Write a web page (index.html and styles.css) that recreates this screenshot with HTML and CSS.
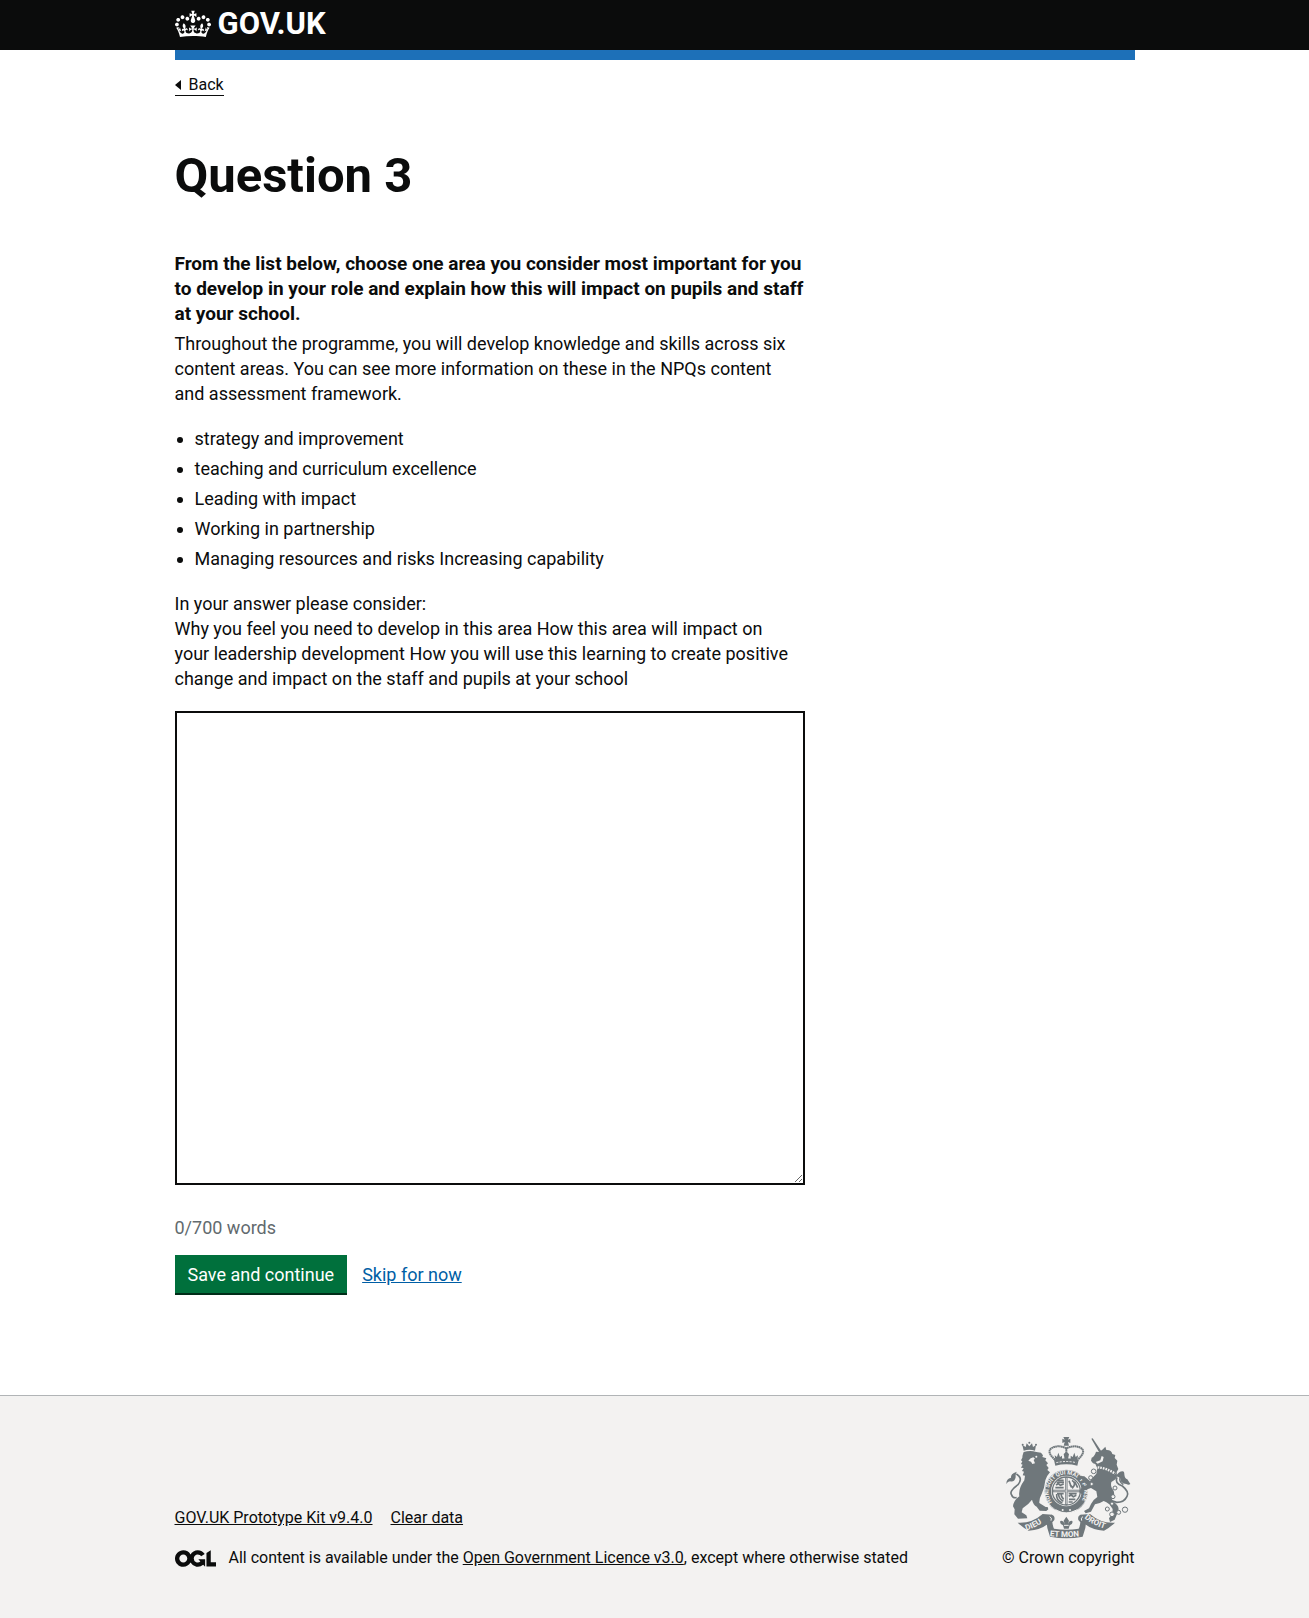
FILE: index.html
```html
<!DOCTYPE html>
<html lang="en">
<head>
  <meta charset="utf-8">
  <meta name="viewport" content="width=device-width, initial-scale=1">
  <title>Question 3 - GOV.UK</title>
  <link rel="stylesheet" href="styles.css">
</head>
<body>
  <header class="header">
    <div class="container header-inner">
      <a class="logo" href="#">
        <svg class="logo-crown" aria-hidden="true" viewBox="0 0 132 97" width="36" height="30"><path fill="currentColor" fill-rule="evenodd" d="M25 30.2c3.5 1.5 7.7-.2 9.1-3.7 1.5-3.6-.2-7.8-3.9-9.2-3.6-1.4-7.6.3-9.1 3.9-1.4 3.5.3 7.5 3.9 9zM9 39.5c3.6 1.5 7.8-.2 9.2-3.7 1.5-3.6-.2-7.8-3.9-9.1-3.6-1.5-7.6.2-9.1 3.8-1.4 3.5.3 7.5 3.8 9zM4.4 57.2c3.5 1.5 7.7-.2 9.1-3.8 1.5-3.6-.2-7.7-3.9-9.1-3.5-1.5-7.6.3-9.1 3.8-1.4 3.5.3 7.6 3.9 9.1zm38.3-21.4c3.5 1.5 7.7-.2 9.1-3.8 1.5-3.6-.2-7.7-3.9-9.1-3.6-1.5-7.6.3-9.1 3.8-1.3 3.6.4 7.7 3.9 9.1zm64.4-5.6c-3.6 1.5-7.8-.2-9.1-3.7-1.5-3.6.2-7.8 3.8-9.2 3.6-1.4 7.7.3 9.2 3.9 1.3 3.5-.4 7.5-3.9 9zm15.9 9.3c-3.6 1.5-7.7-.2-9.1-3.7-1.5-3.6.2-7.8 3.7-9.1 3.6-1.5 7.7.2 9.2 3.8 1.5 3.5-.3 7.5-3.8 9zm4.7 17.7c-3.6 1.5-7.8-.2-9.2-3.8-1.5-3.6.2-7.7 3.9-9.1 3.6-1.5 7.7.3 9.2 3.8 1.3 3.5-.4 7.6-3.9 9.1zM89.3 35.8c-3.6 1.5-7.8-.2-9.2-3.8-1.4-3.6.2-7.7 3.9-9.1 3.6-1.5 7.7.3 9.2 3.8 1.4 3.6-.3 7.7-3.9 9.1zM69.7 17.7l8.9 4.7V9.3l-8.9 2.8c-.2-.3-.5-.6-.9-.9L72.4 0H59.6l3.5 11.2c-.3.3-.6.5-.9.9l-8.8-2.8v13.1l8.8-4.7c.3.3.6.7.9.9l-5 15.4v.1c-.2.8-.4 1.6-.4 2.4 0 4.1 3.1 7.5 7 8.1h.2c.3 0 .7.1 1 .1.4 0 .7 0 1-.1h.2c4-.6 7.1-4.1 7.1-8.1 0-.8-.1-1.7-.4-2.4V34l-5.1-15.4c.4-.2.7-.6 1-.9zM66 92.8c16.9 0 32.8 1.1 47.1 3.2 4-16.9 8.9-26.7 14-33.5l-9.6-3.4c1 4.9 1.1 7.2 0 10.2-1.5-1.4-3-4.3-4.2-8.7L108.6 76c2.8-2 5-3.2 7.5-3.3-4.4 9.4-10 11.9-13.6 11.2-4.3-.8-6.3-4.6-5.6-7.9 1-4.7 5.7-5.9 8-.5 4.3-8.7-3-11.4-7.6-8.8 7.1-7.2 7.9-13.5 2.1-21.1-8 6.1-8.1 12.3-4.5 20.8-4.7-5.4-12.1-2.5-9.5 6.2 3.4-5.2 7.9-2 7.2 3.1-.6 4.3-6.4 7.8-13.5 7.2-10.3-.9-10.9-8-11.2-13.8 2.5-.5 7.1 1.8 11 7.3L80.2 60c-4.1 4.4-8 5.3-12.3 5.4 1.4-4.4 8-11.6 8-11.6H55.5s6.4 7.2 7.9 11.6c-4.2-.1-8-1-12.3-5.4l1.4 16.4c3.9-5.5 8.5-7.7 10.9-7.3-.3 5.8-.9 12.8-11.1 13.8-7.2.6-12.9-2.9-13.5-7.2-.7-5 3.8-8.3 7.1-3.1 2.7-8.7-4.6-11.6-9.4-6.2 3.7-8.5 3.6-14.7-4.6-20.8-5.8 7.6-5 13.9 2.2 21.1-4.7-2.6-11.9.1-7.7 8.8 2.3-5.5 7.1-4.2 8.1.5.7 3.3-1.3 7.1-5.7 7.9-3.5.7-9-1.8-13.5-11.2 2.5.1 4.7 1.3 7.5 3.3l-4.7-15.4c-1.2 4.4-2.7 7.2-4.3 8.7-1.1-3-.9-5.3 0-10.2l-9.5 3.4c5 6.9 9.9 16.7 14 33.5 14.8-2.1 30.8-3.2 47.7-3.2z"/></svg>
        <span class="logo-text">GOV.UK</span>
      </a>
    </div>
  </header>

  <div class="container page">
    <div class="phase-bar"></div>
    <a class="back-link" href="#">Back</a>
    <main class="main">
      <h1 class="title">Question 3</h1>
      <form class="form">
        <label class="label" for="answer">From the list below, choose one area you consider most important for you to develop in your role and explain how this will impact on pupils and staff at your school.</label>
        <div class="hint" id="answer-hint">
          <p class="text">Throughout the programme, you will develop knowledge and skills across six content areas. You can see more information on these in the NPQs content and assessment framework.</p>
          <ul class="list">
            <li>strategy and improvement</li>
            <li>teaching and curriculum excellence</li>
            <li>Leading with impact</li>
            <li>Working in partnership</li>
            <li>Managing resources and risks Increasing capability</li>
          </ul>
          <p class="text">In your answer please consider:<br>Why you feel you need to develop in this area How this area will impact on<br>your leadership development How you will use this learning to create positive change and impact on the staff and pupils at your school</p>
        </div>
        <textarea class="textarea" id="answer" name="answer" aria-describedby="answer-hint word-count"></textarea>
        <p class="word-count" id="word-count">0/700 words</p>
        <div class="actions">
          <button class="button" type="submit">Save and continue</button>
          <a class="link" href="#">Skip for now</a>
        </div>
      </form>
    </main>
  </div>

  <footer class="footer">
    <div class="container footer-inner">
      <div class="footer-meta">
        <ul class="footer-links">
          <li><a href="#">GOV.UK Prototype Kit v9.4.0</a></li>
          <li><a href="#">Clear data</a></li>
        </ul>
        <div class="licence">
          <svg class="licence-logo" aria-hidden="true" viewBox="0 0 483.2 195.7" width="41" height="17"><path fill="currentColor" d="M421.5 142.8V.1l-50.7 32.3v161.1h112.4v-50.7zm-122.3-9.6A47.12 47.12 0 0 1 221 97.8c0-26 21.1-47.1 47.1-47.1 16.7 0 31.4 8.7 39.7 21.8l42.7-27.2A97.63 97.63 0 0 0 268.1 0c-36.5 0-68.3 20.1-85.1 49.7A98 98 0 0 0 97.8 0C43.9 0 0 43.9 0 97.8s43.9 97.8 97.8 97.8c36.5 0 68.3-20.1 85.1-49.7a97.76 97.76 0 0 0 149.6 25.4l19.4 22.2h3v-87.8h-80l24.3 27.5zM97.8 145c-26 0-47.1-21.1-47.1-47.1s21.1-47.1 47.1-47.1 47.1 21.1 47.1 47.1S123.8 145 97.8 145"/></svg>
          <span>All content is available under the <a href="#">Open Government Licence v3.0</a>, except where otherwise stated</span>
        </div>
      </div>
      <a class="copyright" href="#">
        <svg class="crest" aria-hidden="true" viewBox="50 46 378 309" width="126" height="103">
          <defs>
            <path id="garter" d="M191 245A53 53 0 1 1 277 245"/>
            <path id="ribbon-left" d="M114 329Q150 319 182 290"/>
            <path id="ribbon-mid" d="M184 346Q234 352 284 346"/>
            <path id="ribbon-right" d="M288 292Q314 315 362 328"/>
          </defs>
          <!-- lion -->
          <g class="ink">
            <path d="M106 90l-4-17 10 6 3-11 8 9 8-9 3 11 9-6-3 17q-17-5-34 0z"/>
            <circle cx="123" cy="66" r="3"/><circle cx="103" cy="72" r="3"/><circle cx="143" cy="72" r="3"/>
            <path d="M106 94q20-6 38 0l14 2 6 8-2 5 12 4-3 6 8 9-5 5 7 9-4 6 8 7q-8 8-14 24l-4 22-7 19q-8 14-7 27l19 12h6l2 7-6 5-20-1-9-12q-10-5-14-21-10 14-28 26l-3 12 14 9 3 9-28 1-11-13 1-15-5-9q2-18 19-30-4-22 15-48l2-14-7-1 4-11-6-2 5-9-8-1 5-9-5-2 4-8-4-3 4-8q0-6 2-11z"/>
            <path d="M54 190q0-17 14-19-2-12 17-18-4 9-3 17-3 15-17 12-7 1-11 8z"/>
          </g>
          <path class="line" d="M84 160q21 12 5 32-28 20-19 31 3 10 15 8" stroke-width="5"/>
          <g class="paper"><path d="M127 113l8-3 5 4-4 4 4 10-8 2-4-7-8-3z"/><circle cx="144" cy="108" r="3"/></g>
          <!-- crown -->
          <g class="ink">
            <path d="M225 49h18l-4 8 7-3v13l-7-3 3 11h-16l3-11-7 3V54l7 3z"/>
            <path d="M197 118q37-11 74 0l-4 17q-33-8-66 0z"/>
            <path d="M201 119l-2-15 7 5 4-13 5 13 6-4v12l8-1-3-16 8-7 8 7-3 16 8 1v-12l6 4 5-13 4 13 7-5-2 15q-33-10-66 0z"/>
          </g>
          <path class="line" d="M200 117q-26-23-11-34 19-12 45 0 26-12 45 0 15 11-11 34M234 80v20" stroke-width="6" stroke-dasharray="5 1"/>
          <path class="paper-line" d="M204 126q30-7 60 0" stroke-width="3" stroke-dasharray="6 4"/>
          <!-- garter and shield -->
          <circle class="ink" cx="234" cy="212" r="65"/>
          <circle class="paper-line" cx="234" cy="212" r="64" stroke-width="2"/>
          <text class="motto" font-size="17"><textPath href="#garter">HONI SOIT QUI MAL Y PENSE</textPath></text>
          <circle class="paper" cx="234" cy="211" r="46"/>
          <circle class="line" cx="234" cy="211" r="42" stroke-width="4"/>
          <g class="line" stroke-width="5">
            <path d="M234 170v82M193 211h82" stroke-width="7"/>
            <path d="M205 185h22M203 193l7-4 6 5 10-4M201 201h25M208 179h18M242 180l7 20M251 179q14 9 2 22l-8-9M259 183l9 18M241 219h24M241 227l8-4 6 5 9-4M242 236h19M241 244h12M205 220q-2 20 17 27M211 219q-1 15 14 23M218 219q0 10 8 17M206 219h20"/>
          </g>
          <path class="paper-line" d="M234 172v78M195 211h78" stroke-width="2"/>
          <path class="paper-line" d="M203 268q30 19 62 0" stroke-width="3"/>
          <circle class="paper" cx="223" cy="268" r="3"/><circle class="paper" cx="245" cy="268" r="3"/>
          <!-- unicorn -->
          <g class="ink">
            <path d="M309 54l4-1 28 42-6 4z"/>
            <path d="M332 94l10-7 9-9 3 10q15-1 18 12l9 3-2 9 8 8-2 12 5 13-5 9 1 12q-1 10-17 18-4 14 6 25 7 12-4 28l15 16q9 10 1 25l-8 19-14 7-3-11 10-14 1-14-10-14q-9-8-17-10-10 7-26 10l-12 22-16 5-5-7 15-8 6-13q6-13 19-21l-3-17-16-10-20 7-7 12-8-6 8-16 15-6-8-8-8-10-11 5-4-9 12-5 11 1 17 14q7-10 19-22l3-16-6-13-7-2-6-8 2-9q9-4 13-18z"/>
            <path d="M383 167q8-15 20-15 5 0 5 9 1 13 9 15l9 14q-5 5-12 0-19-1-18-17-5-5-13-6z"/>
          </g>
          <path class="line" d="M386 170q-8 18 16 26 22 18 14 31-8 18-31 18l-14-5" stroke-width="5"/>
          <path class="line" d="M397 168q-8 14 8 24" stroke-width="4"/>
          <path class="paper" d="M322 124l14-5 4-13 6 3-3 13-15 7z"/>
          <path class="paper-line" d="M328 140q25 2 53 19" stroke-width="7" stroke-dasharray="5 3"/>
          <g class="chain">
            <circle cx="316" cy="152" r="7"/><circle cx="307" cy="171" r="6"/><circle cx="310" cy="190" r="5"/>
            <circle cx="380" cy="202" r="6"/><circle cx="374" cy="228" r="6"/><circle cx="371" cy="249" r="5"/>
            <circle cx="357" cy="265" r="6"/><circle cx="371" cy="281" r="7"/><circle cx="391" cy="275" r="6"/><circle cx="410" cy="267" r="8"/>
          </g>
          <!-- ribbon -->
          <g class="ink">
            <path d="M88 306q42 3 75-26l29 2q-10 8-9 24-24 22-62 24-15-7-33-24z"/>
            <path d="M380 306q-42 3-75-26l-29 2q10 8 9 24 24 22 62 24 15-7 33-24z"/>
            <path d="M177 322l-3-24q3-13 16-16 11 3 8 16l-6 7q2 14 5 19 37 6 74 0 4-7 5-19l-6-7q-3-13 8-16 13 3 16 16l-3 24-8 26q-49 10-98 0z"/>
            <path d="M234 288l8 12-3 10q4-12 13-9 3 10-8 13l-3 10h-14l-3-10q-11-3-8-13 9-3 13 9l-3-10z"/>
          </g>
          <path class="paper-line" d="M184 288q8 3 4 12M284 288q-8 3-4 12M227 314h14" stroke-width="3"/>
          <g class="motto" font-size="24">
            <text><textPath href="#ribbon-left">DIEU</textPath></text>
            <text><textPath href="#ribbon-mid">ET MON</textPath></text>
            <text><textPath href="#ribbon-right">DROIT</textPath></text>
          </g>
        </svg>
        <span>© Crown copyright</span>
      </a>
    </div>
  </footer>
</body>
</html>
```
FILE: styles.css
```css
* {
  box-sizing: border-box;
}

body {
  display: flex;
  flex-direction: column;
  min-height: 100vh;
  margin: 0;
  background: #ffffff;
  color: #0b0c0c;
  font-family: Roboto, Arial, sans-serif;
  font-size: 18px;
  line-height: 25px;
}

.container {
  width: calc(100% - 60px);
  max-width: 960px;
  margin: 0 auto;
}

.header {
  background: #0b0c0c;
}

.header-inner {
  padding: 9px 0 11px;
}

.logo {
  display: flex;
  align-items: center;
  gap: 7px;
  color: #ffffff;
  text-decoration: none;
}

.logo-text {
  font-size: 31px;
  font-weight: 700;
  line-height: 30px;
}

.phase-bar {
  height: 10px;
  background: #1d70b8;
}

.back-link {
  display: inline-flex;
  align-items: center;
  gap: 8px;
  margin: 15px 0;
  border-bottom: 1px solid #0b0c0c;
  color: #0b0c0c;
  font-size: 16px;
  line-height: 20px;
  text-decoration: none;
}

.back-link::before {
  content: "";
  border: solid transparent;
  border-width: 5px 6px 5px 0;
  border-right-color: #0b0c0c;
}

.main {
  padding: 40px 0 102px;
}

.title {
  margin: 0 0 50px;
  font-size: 49px;
  font-weight: 700;
  line-height: 50px;
}

.form {
  max-width: 630px;
}

.label {
  display: block;
  margin-bottom: 5px;
  font-size: 19px;
  font-weight: 700;
}

.text {
  margin: 0 0 20px;
}

.list {
  margin: 0 0 20px;
  padding-left: 20px;
}

.list li + li {
  margin-top: 5px;
}

.textarea {
  display: block;
  width: 100%;
  height: 474px;
  padding: 5px;
  border: 2px solid #0b0c0c;
  border-radius: 0;
  font: inherit;
  resize: vertical;
}

.word-count {
  margin: 30px 0 15px;
  color: #626a6e;
}

.actions {
  display: flex;
  align-items: center;
  gap: 15px;
}

.button {
  padding: 7px 13px 6px;
  border: 0;
  background: #00703c;
  box-shadow: 0 2px 0 #002d18;
  color: #ffffff;
  font: inherit;
  cursor: pointer;
}

.link {
  color: #005ea5;
}

.footer {
  flex: 1;
  padding: 40px 0 50px;
  border-top: 1px solid #b1b4b6;
  background: #f3f2f1;
  font-size: 16px;
  line-height: 20px;
}

.footer a {
  color: #0b0c0c;
}

.footer-inner {
  display: flex;
  align-items: flex-end;
  justify-content: space-between;
}

.footer-links {
  display: flex;
  gap: 18px;
  margin: 0 0 20px;
  padding: 0;
  list-style: none;
}

.licence {
  display: flex;
  align-items: center;
  gap: 13px;
}

.copyright {
  display: flex;
  flex-direction: column;
  align-items: center;
  gap: 9px;
}

.footer .copyright {
  text-decoration: none;
}

.ink {
  fill: #6f777b;
}

.paper,
.motto {
  fill: #f3f2f1;
}

.motto {
  font-weight: 700;
}

.line {
  fill: none;
  stroke: #6f777b;
}

.paper-line {
  fill: none;
  stroke: #f3f2f1;
}

.chain {
  fill: #f3f2f1;
  stroke: #6f777b;
  stroke-width: 3;
}
```
